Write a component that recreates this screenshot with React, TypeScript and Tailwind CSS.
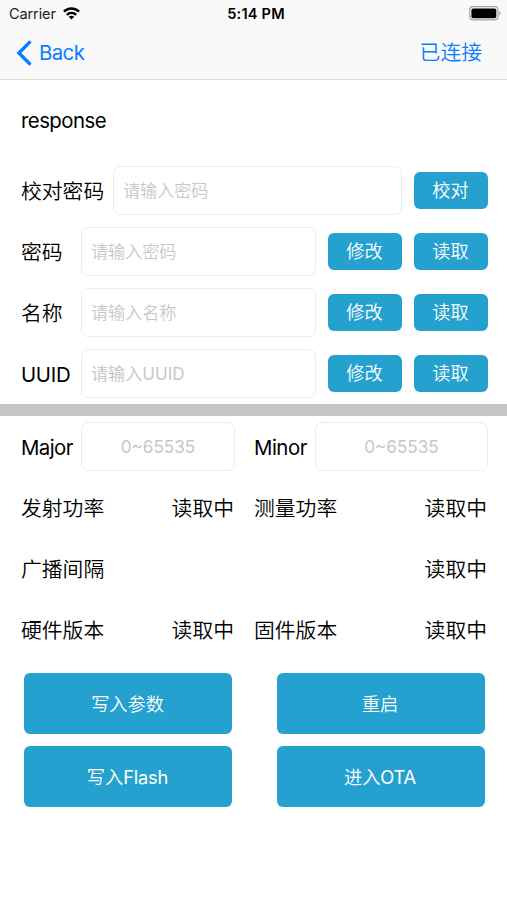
import { useState } from "react";

function StatusBar() {
  return (
    <div className="flex h-[27px] items-center justify-between pl-[9px] pr-[6px] text-black">
      <div className="flex w-[150px] items-center gap-[7px]">
        <span className="text-[14.5px] font-normal tracking-[-0.1px] text-[#222]">Carrier</span>
        <svg width="17" height="13" viewBox="0 0 17 13" fill="none" stroke="#000" strokeWidth="2.4">
          <path d="M0.9 4.7C5.1 0.4 11.9 0.4 16.1 4.7" />
          <path d="M3.8 7.8C6.4 5.2 10.6 5.2 13.2 7.8" />
          <path d="M8.5 12.4L5.8 9.7C7.3 8.3 9.7 8.3 11.2 9.7Z" fill="#000" stroke="none" />
        </svg>
      </div>
      <span className="pl-[2px] text-[14.6px] font-semibold tracking-[0.2px]">5:14 PM</span>
      <div className="flex w-[150px] justify-end">
        <svg width="32" height="15" viewBox="0 0 32 15">
          <rect x="0.7" y="0.7" width="28.3" height="13.2" rx="3.4" fill="none" stroke="#a3a3a3" strokeWidth="1.2" />
          <rect x="2.4" y="2.4" width="24.9" height="9.8" rx="1.8" fill="#000" />
          <path d="M30.2 5.2C32 5.9 32 8.7 30.2 9.4Z" fill="#a3a3a3" />
        </svg>
      </div>
    </div>
  );
}

function NavBar() {
  return (
    <div className="flex h-[52px] items-center justify-between pl-[16px] pr-[25px] text-[#0b7bff]">
      <button className="flex items-center gap-[7px]">
        <svg width="16" height="26" viewBox="0 0 16 26" fill="none" stroke="currentColor" strokeWidth="3.4">
          <path d="M14.5 1.4L2.9 13L14.5 24.6" />
        </svg>
        <span className="text-[20.4px] font-normal leading-[26px] tracking-[-0.6px]">Back</span>
      </button>
      <button className="text-[20.8px] leading-[26px]">已连接</button>
    </div>
  );
}

function SmallButton({ children }: { children: string }) {
  return (
    <button className="ml-[12px] h-[37px] w-[74px] shrink-0 rounded-[6px] bg-[#24a1ce] pr-px text-[18.2px] leading-[37px] text-white">
      {children}
    </button>
  );
}

function BigButton({ text, latin }: { text: string; latin?: string }) {
  return (
    <button className="h-[61px] w-[208px] rounded-[6px] bg-[#24a1ce] pr-px text-[18.3px] tracking-[-0.1px] text-white">
      {text}
      {latin && <span className="font-normal tracking-[-0.2px]">{latin}</span>}
    </button>
  );
}

type FieldProps = { label: string; labelClass: string; inputClass?: string; placeholder: string; actions: string[] };

function Field({ label, labelClass, inputClass = "", placeholder, actions }: FieldProps) {
  const [value, setValue] = useState("");
  return (
    <div className="flex h-[61px] items-center pl-[21px] pr-[19px]">
      <span className={labelClass}>{label}</span>
      <input
        value={value}
        onChange={(e) => setValue(e.target.value)}
        placeholder={placeholder}
        className={`h-[49px] min-w-0 flex-1 rounded-[7px] border border-[#ececec] px-[9px] pb-px text-[17.1px] outline-none placeholder:text-[#c7c7cb] ${inputClass}`}
      />
      {actions.map((action) => (
        <SmallButton key={action}>{action}</SmallButton>
      ))}
    </div>
  );
}

function NumberInput() {
  return (
    <input
      placeholder="0~65535"
      className="h-[49px] min-w-0 flex-1 rounded-[7px] border border-[#ececec] text-center text-[17.1px] font-normal outline-none placeholder:text-[#c7c7cb]"
    />
  );
}

function InfoRow({ items }: { items: string[] }) {
  return (
    <div className="flex h-[61px] items-center pl-[21px] pr-[20px] pt-[3px]">
      {items.length === 2 ? (
        <>
          <div className="flex w-[213px] justify-between">
            <span>{items[0]}</span>
            <span>读取中</span>
          </div>
          <div className="ml-[20px] flex flex-1 justify-between">
            <span>{items[1]}</span>
            <span>读取中</span>
          </div>
        </>
      ) : (
        <div className="flex flex-1 justify-between">
          <span>{items[0]}</span>
          <span>读取中</span>
        </div>
      )}
    </div>
  );
}

const fields = [
  { label: "校对密码", labelClass: "w-[92px] pt-[2px]", placeholder: "请输入密码", actions: ["校对"] },
  { label: "密码", labelClass: "w-[60px] pt-[2px]", placeholder: "请输入密码", actions: ["修改", "读取"] },
  { label: "名称", labelClass: "w-[60px] pt-[2px]", placeholder: "请输入名称", actions: ["修改", "读取"] },
  {
    label: "UUID",
    labelClass: "w-[60px] pt-[2px] text-[20.4px] font-normal tracking-[-0.3px]",
    inputClass: "font-normal",
    placeholder: "请输入UUID",
    actions: ["修改", "读取"],
  },
];

export default function App() {
  return (
    <div className="h-[900px] w-[507px] overflow-hidden bg-white font-['Inter','Noto_Sans_CJK_SC',sans-serif] text-[20.8px] leading-[26px] font-[350] text-black">
      <div className="h-[80px] border-b border-[#dedede] bg-[#f9f9f9]">
        <StatusBar />
        <NavBar />
      </div>

      <div className="flex h-[80px] items-center pl-[21px] pt-px text-[20.4px] font-normal tracking-[-0.55px]">response</div>

      {fields.map((field, i) => (
        <Field key={i} {...field} />
      ))}

      <div className="h-[12px] bg-[#c6c6c8]"></div>

      <div className="flex h-[61px] items-center pl-[21px] pr-[19px]">
        <span className="w-[60px] pt-[2px] text-[20.4px] font-normal tracking-[-0.6px]">Major</span>
        <div className="flex w-[154px]">
          <NumberInput />
        </div>
        <span className="ml-[19px] w-[61px] pt-[2px] text-[20.4px] font-normal tracking-[-0.5px]">Minor</span>
        <NumberInput />
      </div>
      <InfoRow items={["发射功率", "测量功率"]} />
      <InfoRow items={["广播间隔"]} />
      <InfoRow items={["硬件版本", "固件版本"]} />

      <div className="mt-[13px] grid grid-cols-2 gap-y-[12px] pl-[24px]">
        <BigButton text="写入参数" />
        <div className="pl-[11px]">
          <BigButton text="重启" />
        </div>
        <BigButton text="写入" latin="Flash" />
        <div className="pl-[11px]">
          <BigButton text="进入" latin="OTA" />
        </div>
      </div>
    </div>
  );
}
